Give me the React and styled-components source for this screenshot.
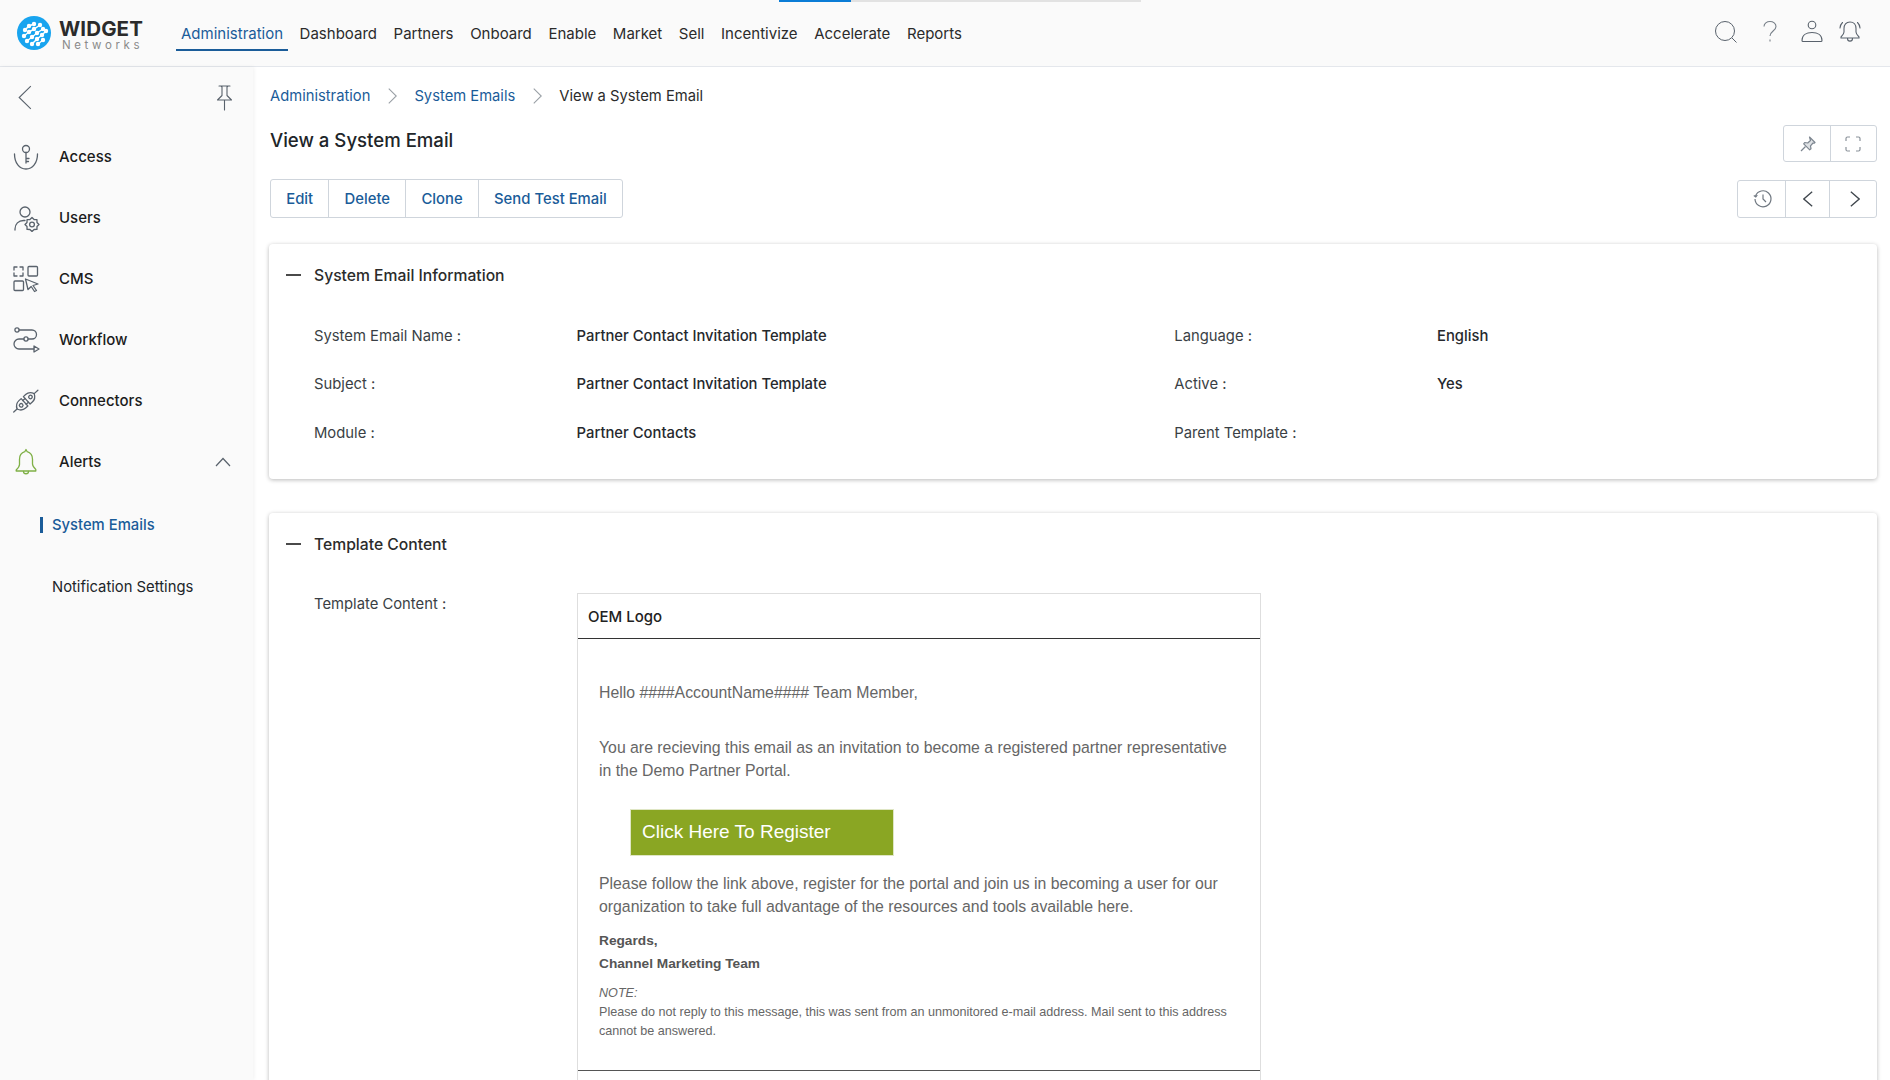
import React from "react";
import styled, { createGlobalStyle } from "styled-components";

const Global = createGlobalStyle`
  html, body { margin: 0; padding: 0; height: 100%; background: #fff; }
  body { font-family: Inter, "Liberation Sans", sans-serif; color: #212529; overflow: hidden; }
  #root { height: 100vh; overflow: hidden; }
  * { box-sizing: border-box; }
`;

const Page = styled.div`display: flex; flex-direction: column; height: 100vh; overflow: hidden; position: relative;`;
const LoadBar = styled.div`
  position: absolute; top: 0; left: 779px; width: 362px; height: 2px; background: #e2e2e2;
  &::before { content: ""; position: absolute; left: 0; top: 0; bottom: 0; width: 72px; background: #0a7cd6; }
`;
const Header = styled.header`
  flex: none; height: 67px; display: flex; align-items: center; background: #fafafa;
  border-bottom: 1px solid #e4e7ec; padding: 0 22px 0 17px;
`;
const Brand = styled.div`display: flex; align-items: center; gap: 8px; width: 159px;`;
const BrandText = styled.div`display: flex; flex-direction: column; margin-top: 3px;`;
const BrandName = styled.span`font-size: 20.500px; font-weight: 700; color: #2b2b2b; line-height: 20px; letter-spacing: 0.1px;`;
const BrandSub = styled.span`font-size: 11.500px; color: #8a8a8a; letter-spacing: 3.600px; margin-left: 3px; line-height: 12px;`;
const TopNav = styled.nav`display: flex; align-items: stretch; height: 67px;`;
const TopLink = styled.a`
  display: flex; align-items: center; height: 50px; margin-top: 1px; padding: 0 ${p => (p.$active ? "5px" : "0")};
  margin-right: ${p => (p.$active ? "11.500px" : "16.600px")}; font-size: 15px; font-weight: 400;
  color: ${p => (p.$active ? "#1a5c99" : "#2b2b2b")};
  border-bottom: 2px solid ${p => (p.$active ? "#1a5c99" : "transparent")};
  padding-top: 18px;
`;
const TopIcons = styled.div`margin-left: auto; display: flex; align-items: center; margin-top: -2px;`;
const TopIcon = styled.span`display: flex; justify-content: center; width: ${p => p.$w}px;`;

const Body = styled.div`flex: 1; display: flex; min-height: 0;`;
const Side = styled.aside`
  flex: none; width: 253px; background: #fafafa; box-shadow: 1px 0 4px rgba(0,0,0,.06); position: relative;
`;
const SideTop = styled.div`
  height: 59px; display: flex; align-items: center; justify-content: space-between; padding: 2px 20px 0 18px;
`;
const SideItem = styled.div`
  height: 61px; display: flex; align-items: center; padding: 0 22px 0 12px; gap: 19px;
  font-size: 15px; font-weight: 500; color: #1c1c1c;
`;
const SideLabel = styled.span`flex: 1;`;
const SubItem = styled.div`
  height: 62px; display: flex; align-items: center; padding-left: 52px; font-size: 14.800px; position: relative;
  font-weight: ${p => (p.$active ? 500 : 400)}; color: ${p => (p.$active ? "#1a5c99" : "#212529")};
  &::before {
    content: ${p => (p.$active ? '""' : "none")};
    position: absolute; left: 40px; top: 23px; width: 3px; height: 16px; background: #1a5c99;
  }
`;
const SubList = styled.div`padding-top: 2px;`;

const Main = styled.main`flex: 1; min-width: 0; padding: 0 13px 0 16px; overflow: hidden;`;
const Crumbs = styled.div`height: 58px; display: flex; align-items: center; gap: 17.500px; padding: 0 0 1px 1px; font-size: 14.750px;`;
const Crumb = styled.a`color: ${p => (p.$current ? "#2b2b2b" : "#1a5c99")};`;
const TitleRow = styled.div`display: flex; justify-content: space-between; align-items: flex-start; height: 36px; padding-left: 1px;`;
const Title = styled.h1`margin: 0; font-size: 18.600px; font-weight: 500; line-height: 30px; color: #212529;`;
const ActionRow = styled.div`display: flex; justify-content: space-between; align-items: center; margin-top: 18px; height: 39px; padding-left: 1px;`;
const Group = styled.div`display: flex; border: 1px solid #cfd5dc; border-radius: 3px; background: #fff; height: ${p => p.$h || 39}px;`;
const ActionBtn = styled.button`
  border: 0; background: none; padding: 0 15.200px; font: 500 14.850px Inter, sans-serif; color: #1a5c99;
  & + & { border-left: 1px solid #cfd5dc; }
`;
const IconBtn = styled.button`
  border: 0; background: none; padding: ${p => p.$pad || "0"}; width: ${p => p.$w || 46}px; display: flex; align-items: center; justify-content: center;
  & + & { border-left: 1px solid #cfd5dc; }
`;
const Card = styled.section`
  background: #fff; border-radius: 4px; box-shadow: 0 1px 4px rgba(0,0,0,.28); margin-top: ${p => p.$mt}px;
  height: ${p => p.$h || "auto"};
`;
const CardHead = styled.div`
  height: 62px; display: flex; align-items: center; gap: 13px; padding-left: 17px; font-size: 15.700px; font-weight: 500; color: #2b2b2b;
`;
const Dash = styled.i`display: block; width: 15px; height: 2px; background: #4a4a4a;`;
const Fields = styled.div`
  display: grid; grid-template-columns: 262.600px 597.700px 262.700px 1fr; grid-auto-rows: 48.400px; align-items: center;
  padding: 5.800px 0 0 45px; font-size: 14.800px;
`;
const Label = styled.div`color: #3a3f45;`;
const Value = styled.div`font-weight: 500; color: #26292d;`;
const TemplateRow = styled.div`display: grid; grid-template-columns: 263px 684px; padding: 18px 0 0 45px;`;
const TemplateLabel = styled(Label)`font-size: 14.800px; line-height: 22px;`;
const Mail = styled.div`border: 1px solid #dedede; border-bottom: 0; font-family: "Liberation Sans", Arial, sans-serif; color: #666;`;
const MailHead = styled.div`
  height: 45px; display: flex; align-items: center; padding-left: 10px; border-bottom: 1px solid #333;
  font: 500 15px Inter, sans-serif; color: #222;
`;
const MailBody = styled.div`padding: 42px 22px 0 21px; border-bottom: 1px solid #555; height: 432px;`;
const MailFoot = styled.div`height: 90px;`;
const Para = styled.p`margin: 0 0 ${p => p.$mb || 0}px; font-size: 15.820px; line-height: 23px;`;
const RegBtn = styled.a`
  display: flex; align-items: center; width: 264px; height: 47px; margin: 0 0 16.500px 31px; padding-left: 11px;
  background: #8aa623; border: 1px solid #dfe6c4; color: #fff; font-size: 19px;
`;
const Bold = styled.div`font-size: 13.700px; font-weight: 700; line-height: 23px; color: #555;`;
const Note = styled.div`font-size: 12.600px; line-height: 19px; color: #666; margin-top: 8.500px;`;
const Em = styled.em`display: block;`;

const S = { fill: "none", stroke: "#59626c", strokeWidth: 1.3, strokeLinecap: "round", strokeLinejoin: "round" };

const chains = [
  [[8, 14], [12, 10], [17, 8]],
  [[7, 20], [12, 16], [17, 13], [23, 9]],
  [[10, 25], [15, 21], [20, 17], [26, 13]],
  [[15, 28], [20, 23], [25, 19], [29, 15]],
  [[21, 28], [26, 24]],
];
const Logo = () => (
  <svg width="34" height="34" viewBox="0 0 34 34">
    <circle cx="17" cy="17" r="17" fill="#18a4ef" />
    {chains.map((c, i) => (
      <g key={i} fill="#fff">
        <polyline points={c.map(p => p.join(",")).join(" ")} fill="none" stroke="#fff" strokeWidth="1.500" />
        {c.map((p, j) => <circle key={j} cx={p[0]} cy={p[1]} r="2.200" />)}
      </g>
    ))}
  </svg>
);

const gearPoints = (cx, cy) => Array.from({ length: 16 }, (_, i) => {
  const r = i % 2 ? 5.400 : 7;
  const a = (i * Math.PI) / 8;
  return `${(cx + r * Math.cos(a)).toFixed(2)},${(cy + r * Math.sin(a)).toFixed(2)}`;
}).join(" ");

const Access = () => (
  <svg width="28" height="28" viewBox="0 0 28 28" {...S}>
    <circle cx="14" cy="6" r="3.500" />
    <path d="M14 9.500V20M14 15.500h3M14 18.500h2.500" />
    <path d="M2.500 11C2.500 20 7.500 26 14 26s11.500-6 11.500-15" />
  </svg>
);
const Users = () => (
  <svg width="28" height="28" viewBox="0 0 28 28" {...S}>
    <circle cx="13" cy="8" r="5" />
    <path d="M3 26v-1c0-5 3.500-8.500 8.500-8.500h1.500" />
    <polygon points={gearPoints(20, 20.500)} />
    <circle cx="20" cy="20.500" r="2.400" />
  </svg>
);
const Cms = () => (
  <svg width="28" height="28" viewBox="0 0 28 28" {...S}>
    <path d="M2 5V2h3M8 2h3v3M11 8v3H8M5 11H2V8" />
    <rect x="16" y="1.500" width="9.500" height="9.500" rx="1" />
    <rect x="2" y="16" width="9.500" height="9.500" rx="1" />
    <path d="M13.500 14l12.500 5-5 1.500 3.500 5-2 1-3.300-5-3.200 3z" />
  </svg>
);
const Workflow = () => (
  <svg width="28" height="28" viewBox="0 0 28 28" {...S}>
    <circle cx="5" cy="4" r="2.100" />
    <path d="M7.100 4H20a4.500 4.500 0 0 1 0 9h-4" />
    <circle cx="14" cy="13" r="2.100" />
    <path d="M11.900 13H7a5 5 0 0 0 0 10h15" />
    <path d="M22 20l5 3-5 3z" />
  </svg>
);
const Connectors = () => (
  <svg width="28" height="28" viewBox="0 0 28 28" {...S}>
    <g transform="rotate(-42 14 14)">
      <path d="M-2.500 14h4.500" />
      <path d="M2 14c1.500-3.500 4-5 7-5h3v10H9c-3 0-5.500-1.500-7-5z" />
      <circle cx="7.500" cy="14" r="1.800" />
      <path d="M12 11.500h3M12 16.500h3" />
      <path d="M15 9h3c3 0 5.500 1.500 7 5-1.500 3.500-4 5-7 5h-3z" />
      <circle cx="20" cy="14" r="1.800" />
      <path d="M25 14h5" />
    </g>
  </svg>
);
const BellGreen = () => (
  <svg width="28" height="28" viewBox="0 0 28 28" fill="none" stroke="#7fb046" strokeWidth="1.300" strokeLinejoin="round" strokeLinecap="round">
    <path d="M14 1.500l1.200 2.200c3.300 1 5.300 4 5.300 7.500v4.800c0 2 1.500 3.800 3.300 5.500v1.500H4.200V22c1.800-1.700 3.300-3.500 3.300-5.500v-5.300c0-3.500 2-6.500 5.300-7.500z" />
    <path d="M11.500 23.500c0 3 5 3 5 0" />
  </svg>
);
const Chev = ({ dir, size = 12, h = 24, color = "#59626c", sw = 1.100 }) => (
  <svg width={size} height={h} viewBox="0 0 12 24" preserveAspectRatio="none" fill="none" stroke={color} strokeWidth={sw}>
    <path vectorEffect="non-scaling-stroke" d={dir === "left" ? "M11 1L1 12l10 11" : "M1 1l10 11L1 23"} />
  </svg>
);
const Up = () => (
  <svg width="16" height="10" viewBox="0 0 16 10" fill="none" stroke="#59626c" strokeWidth="1.200"><path d="M1 9l7-7.500L15 9" /></svg>
);
const SidePin = () => (
  <svg width="17" height="26" viewBox="0 0 17 26" {...S} strokeWidth="1.100">
    <path d="M3 1h11M5 1l1 1v8.500L1.500 15H15.500L11 10.500V2l1-1M8.500 15v10" />
  </svg>
);
const Search = () => (
  <svg width="24" height="24" viewBox="0 0 24 24" fill="none" stroke="#59626c" strokeWidth="1"><circle cx="11" cy="11" r="9.500" /><path d="M18 18l4.500 4.500" /></svg>
);
const Help = () => (
  <svg width="16" height="24" viewBox="0 0 16 24" fill="none" stroke="#777f88" strokeWidth="1.100"><path d="M2 6.500C2 3.500 4.800 1.500 8 1.500s6 2 6 5c0 4.500-6 4.500-6 9.500" /><path d="M8 19.500v2" /></svg>
);
const User = () => (
  <svg width="24" height="24" viewBox="0 0 24 24" fill="none" stroke="#59626c" strokeWidth="1.100"><circle cx="12" cy="5" r="3.800" /><path d="M2 20.500C2 15 6.500 12.500 12 12.500s10 2.500 10 8c0 .5-.5 1-1 1H3c-.5 0-1-.5-1-1z" /></svg>
);
const Bell = () => (
  <svg width="24" height="24" viewBox="0 0 24 24" fill="none" stroke="#59626c" strokeWidth="1.100" strokeLinecap="round"><path d="M12 2c4 0 6 3 6 6.500V12c0 2 2 4 3 5v1H3v-1c1-1 3-3 3-5V8.500C6 5 8 2 12 2zM9.500 18.500c0 3.500 5 3.500 5 0" /><path d="M2 8c0-2.500 1-4 2.500-5.500M22 8c0-2.500-1-4-2.500-5.500" /></svg>
);
const Pin = () => (
  <svg width="16" height="16" viewBox="0 0 16 16" fill="#dfe2e5" stroke="#7d8690" strokeWidth="1.200" strokeLinejoin="round"><path d="M9.500 1l5.500 5.500-1 .8-1-.3-2.500 2.800.5 3-1.300 1-6-6 1-1.300 3 .5 2.800-2.500-.3-1z" /><path d="M5.500 10.500L1 15" /></svg>
);
const Expand = () => (
  <svg width="16" height="16" viewBox="0 0 16 16" fill="none" stroke="#8a929a" strokeWidth="1.200"><path d="M1 5V2.500C1 1.500 1.500 1 2.500 1H5M11 1h2.500c1 0 1.500.5 1.500 1.500V5M15 11v2.500c0 1-.5 1.500-1.500 1.500H11M5 15H2.500C1.500 15 1 14.500 1 13.500V11" /></svg>
);
const History = () => (
  <svg width="20" height="20" viewBox="0 0 20 20" fill="none" stroke="#6f7780" strokeWidth="1.200"><path d="M2.500 7A8 8 0 1 1 2 10" /><path d="M.800 6.500l2 1.500 1.500-2M10 5.500V10l3 3" /></svg>
);

const navs = ["Dashboard", "Partners", "Onboard", "Enable", "Market", "Sell", "Incentivize", "Accelerate", "Reports"];
const side = [["Access", Access], ["Users", Users], ["CMS", Cms], ["Workflow", Workflow], ["Connectors", Connectors]];

export default function App() {
  return (
    <Page>
      <Global />
      <LoadBar />
      <Header>
        <Brand>
          <Logo />
          <BrandText>
            <BrandName>WIDGET</BrandName>
            <BrandSub>Networks</BrandSub>
          </BrandText>
        </Brand>
        <TopNav>
          <TopLink $active>Administration</TopLink>
          {navs.map(n => <TopLink key={n}>{n}</TopLink>)}
        </TopNav>
        <TopIcons>
          <TopIcon $w={44}><Search /></TopIcon>
          <TopIcon $w={44}><Help /></TopIcon>
          <TopIcon $w={39}><User /></TopIcon>
          <TopIcon $w={37}><Bell /></TopIcon>
        </TopIcons>
      </Header>
      <Body>
        <Side>
          <SideTop>
            <Chev dir="left" size={14} h={25} />
            <SidePin />
          </SideTop>
          {side.map(([n, Ico]) => (
            <SideItem key={n}><Ico /><SideLabel>{n}</SideLabel></SideItem>
          ))}
          <SideItem><BellGreen /><SideLabel>Alerts</SideLabel><Up /></SideItem>
          <SubList>
            <SubItem $active>System Emails</SubItem>
            <SubItem>Notification Settings</SubItem>
          </SubList>
        </Side>
        <Main>
          <Crumbs>
            <Crumb>Administration</Crumb>
            <Chev dir="right" size={9} h={16} color="#9aa0a6" />
            <Crumb>System Emails</Crumb>
            <Chev dir="right" size={9} h={16} color="#9aa0a6" />
            <Crumb $current>View a System Email</Crumb>
          </Crumbs>
          <TitleRow>
            <Title>View a System Email</Title>
            <Group $h={37}>
              <IconBtn $w={46} $pad="0 0 0 2px"><Pin /></IconBtn>
              <IconBtn $w={46} $pad="0 2px 0 0"><Expand /></IconBtn>
            </Group>
          </TitleRow>
          <ActionRow>
            <Group>
              <ActionBtn>Edit</ActionBtn>
              <ActionBtn>Delete</ActionBtn>
              <ActionBtn>Clone</ActionBtn>
              <ActionBtn>Send Test Email</ActionBtn>
            </Group>
            <Group $h={38}>
              <IconBtn $w={47} $pad="0 0 0 2px"><History /></IconBtn>
              <IconBtn $w={44}><Chev dir="left" size={10} h={16} color="#3f464d" sw={1.300} /></IconBtn>
              <IconBtn $w={47} $pad="0 0 0 3px"><Chev dir="right" size={10} h={16} color="#3f464d" sw={1.300} /></IconBtn>
            </Group>
          </ActionRow>
          <Card $mt={26} $h="235px">
            <CardHead><Dash />System Email Information</CardHead>
            <Fields>
              <Label>System Email Name :</Label><Value>Partner Contact Invitation Template</Value>
              <Label>Language :</Label><Value>English</Value>
              <Label>Subject :</Label><Value>Partner Contact Invitation Template</Value>
              <Label>Active :</Label><Value>Yes</Value>
              <Label>Module :</Label><Value>Partner Contacts</Value>
              <Label>Parent Template :</Label><Value />
            </Fields>
          </Card>
          <Card $mt={34}>
            <CardHead><Dash />Template Content</CardHead>
            <TemplateRow>
              <TemplateLabel>Template Content :</TemplateLabel>
              <Mail>
                <MailHead>OEM Logo</MailHead>
                <MailBody>
                  <Para $mb={32}>Hello ####AccountName#### Team Member,</Para>
                  <Para $mb={26.500}>You are recieving this email as an invitation to become a registered partner representative in the Demo Partner Portal.</Para>
                  <RegBtn>Click Here To Register</RegBtn>
                  <Para $mb={11}>Please follow the link above, register for the portal and join us in becoming a user for our organization to take full advantage of the resources and tools available here.</Para>
                  <Bold>Regards,</Bold>
                  <Bold>Channel Marketing Team</Bold>
                  <Note><Em>NOTE:</Em>Please do not reply to this message, this was sent from an unmonitored e-mail address. Mail sent to this address cannot be answered.</Note>
                </MailBody>
                <MailFoot />
              </Mail>
            </TemplateRow>
          </Card>
        </Main>
      </Body>
    </Page>
  );
}
